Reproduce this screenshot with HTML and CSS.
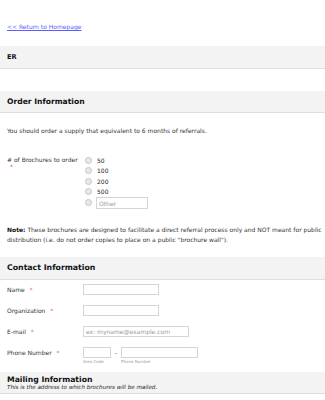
FILE: index.html
```html
<!DOCTYPE html>
<html lang="en">
<head>
  <meta charset="UTF-8">
  <title>Brochure Order Form</title>
  <link rel="stylesheet" href="styles.css">
</head>
<body>
  <div class="page">
    <div class="top-link">
      <a href="#">&lt;&lt; Return to Homepage</a>
    </div>

    <div class="section-head small">ER</div>

    <div class="section-head order">Order Information</div>

    <p class="intro">You should order a supply that equivalent to 6 months of referrals.</p>

    <div class="form-line brochures">
      <div class="form-label">
        # of Brochures to order
        <span class="req">*</span>
      </div>
      <div class="radio-list">
        <label class="radio"><span class="dot"></span>50</label>
        <label class="radio"><span class="dot"></span>100</label>
        <label class="radio"><span class="dot"></span>200</label>
        <label class="radio"><span class="dot"></span>500</label>
        <label class="radio"><span class="dot"></span><input class="other" type="text" placeholder="Other"></label>
      </div>
    </div>

    <p class="note"><b>Note:</b> These brochures are designed to facilitate a direct referral process only and NOT meant for public distribution (i.e. do not order copies to place on a public "brochure wall").</p>

    <div class="section-head big">Contact Information</div>

    <div class="form-line first">
      <div class="form-label">Name <span class="req">*</span></div>
      <input class="field short" type="text">
    </div>
    <div class="form-line">
      <div class="form-label">Organization <span class="req">*</span></div>
      <input class="field short" type="text">
    </div>
    <div class="form-line">
      <div class="form-label">E-mail <span class="req">*</span></div>
      <input class="field email" type="text" placeholder="ex: myname@example.com">
    </div>
    <div class="form-line">
      <div class="form-label">Phone Number <span class="req">*</span></div>
      <div class="phone">
        <div class="sub">
          <input class="field area" type="text">
          <span class="sublabel">Area Code</span>
        </div>
        <span class="dash">-</span>
        <div class="sub">
          <input class="field number" type="text">
          <span class="sublabel">Phone Number</span>
        </div>
      </div>
    </div>

    <div class="section-head mailing">
      <div class="title">Mailing Information</div>
      <div class="desc">This is the address to which brochures will be mailed.</div>
    </div>
  </div>
</body>
</html>
```

FILE: styles.css
```css
/* General */
body {
  margin: 0;
  padding: 0;
  background: #fff;
  font-family: "DejaVu Sans", Verdana, sans-serif;
  font-size: 6px;
  color: #333;
}

.page {
  width: 325px;
}

.top-link {
  padding: 23px 7px 0;
  height: 21px;
  box-sizing: border-box;
  line-height: 8px;
}

.top-link a {
  color: #5b5bff;
}

/* Section headers */
.section-head {
  background: #f3f3f3;
  border-bottom: 1px solid #dedede;
  padding: 0 7px;
  font-weight: bold;
  color: #111;
  display: flex;
  align-items: center;
}

.section-head.small {
  margin-top: 23px;
  height: 22px;
  font-size: 6.6px;
}

.section-head.order {
  margin-top: 22px;
  height: 21px;
  font-size: 7.6px;
}

.section-head.big {
  margin-top: 12px;
  height: 22px;
  font-size: 7.8px;
}

.section-head.mailing {
  margin-top: 8px;
  height: 22px;
  display: block;
  padding-top: 3px;
  box-sizing: border-box;
}

.section-head.mailing .title {
  font-size: 7.7px;
  line-height: 9px;
}

.section-head.mailing .desc {
  font-weight: normal;
  font-style: italic;
  font-size: 5.6px;
  line-height: 7px;
  color: #222;
}

/* Text blocks */
.intro {
  margin: 14px 7px 0;
  line-height: 8px;
}

.note {
  margin: 17px 0 0 7px;
  line-height: 10px;
}

.note b {
  color: #111;
}

/* Form lines */
.form-line {
  display: flex;
  align-items: flex-start;
  padding: 0 7px;
  margin-top: 10px;
}

.form-line.first {
  margin-top: 4px;
}

.form-line.brochures {
  margin-top: 20px;
}

.form-label {
  width: 76px;
  flex-shrink: 0;
  line-height: 11px;
}

.req {
  color: #e05555;
  margin-left: 3px;
}

.brochures .form-label {
  width: 78px;
  line-height: 7px;
  padding-top: 1px;
}

.brochures .req {
  display: block;
  margin-left: 3px;
}

/* Radios */
.radio-list {
  display: flex;
  flex-direction: column;
}

.radio {
  display: flex;
  align-items: center;
  height: 10.5px;
  color: #222;
}

.dot {
  width: 5px;
  height: 5px;
  border-radius: 50%;
  border: 1px solid #c4c4c4;
  background: #e8e8e8;
  margin-right: 5px;
}

.other {
  width: 52px;
  height: 12px;
  box-sizing: border-box;
  margin: 2px 0 0 -1px;
}

/* Inputs */
input {
  font-family: inherit;
  font-size: 6px;
  border: 1px solid #d5d5d5;
  padding: 0 2px;
  outline: none;
  background: #fff;
}

input::placeholder {
  color: #999;
}

.field {
  height: 11px;
  box-sizing: border-box;
}

.short {
  width: 76px;
}

.email {
  width: 106px;
}

.phone {
  display: flex;
  align-items: flex-start;
}

.sub {
  display: flex;
  flex-direction: column;
}

.area {
  width: 28px;
}

.number {
  width: 77px;
}

.dash {
  width: 10px;
  text-align: center;
  line-height: 11px;
}

.sublabel {
  font-size: 4px;
  line-height: 5px;
  color: #999;
  margin-top: 1px;
}
```
